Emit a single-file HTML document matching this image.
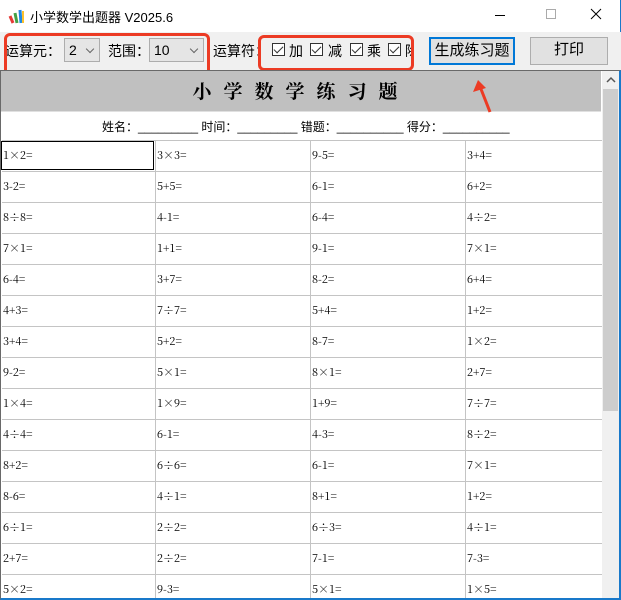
<!DOCTYPE html>
<html><head><meta charset="utf-8">
<style>
*{margin:0;padding:0;box-sizing:border-box}
body{width:621px;height:600px;background:#f0f0f0;position:relative;overflow:hidden;font-family:"Liberation Sans","Noto Sans CJK SC",sans-serif;color:#000}
.a{position:absolute}
.title{top:0;left:0;width:621px;height:32px;background:#fff;border-right:1px solid #1979ca}
.t14{font-size:14px}
.combo{background:#e5e5e5;border:1px solid #adadad;height:24px;font-size:14px;padding-left:4px;line-height:22px}
.chev{position:absolute;right:6px;top:7px;width:6px;height:6px;border-right:1px solid #666;border-bottom:1px solid #666;transform:rotate(45deg)}
.cb{width:13px;height:13px;border:1px solid #333;background:#fff}
.cb:after{content:"";position:absolute;left:3px;top:0px;width:4px;height:8px;border-right:1.5px solid #333;border-bottom:1.5px solid #333;transform:rotate(45deg)}
.red{border:3px solid #ec3b24;border-radius:6px}
.btn{background:#e1e1e1;border:1px solid #adadad;font-size:15px;text-align:center;line-height:24px}
.frame{top:70px;left:0;width:621px;height:530px;background:#fff;border-top:1px solid #696969;border-left:1px solid #696969;border-right:2px solid #1979ca;border-bottom:2px solid #1979ca;overflow:hidden}
.cell{position:absolute;font-size:11px;line-height:31px;padding-left:2px;height:31px;font-family:"Noto Serif CJK SC","Liberation Serif",serif}
.hl{position:absolute;left:1px;width:600px;height:1px;background:#c4c4c4}
.vl{position:absolute;width:1px;background:#c4c4c4}
</style></head><body>
<div class="a title">
  <svg class="a" style="left:8px;top:7px" width="18" height="18" viewBox="0 0 18 18">
    <path d="M2 9 L5 16" stroke="#e53935" stroke-width="3"/>
    <path d="M7 6 L9 16" stroke="#43a047" stroke-width="3"/>
    <path d="M12 3 L13 16" stroke="#1e88e5" stroke-width="3"/>
    <path d="M15 4 L15 16" stroke="#fbc02d" stroke-width="2"/>
  </svg>
  <div class="a" style="left:30px;top:7px;font-size:13px">小学数学出题器 V2025.6</div>
  <div class="a" style="left:495px;top:15px;width:10px;height:1px;background:#000"></div>
  <div class="a" style="left:546px;top:9px;width:10px;height:10px;border:1px solid #aaa"></div>
  <svg class="a" style="left:590px;top:8px" width="12" height="12"><path d="M1 1L11 11M11 1L1 11" stroke="#000" stroke-width="1"/></svg>
</div>
<div class="a t14" style="left:5px;top:41px">运算元：</div>
<div class="a combo" style="left:64px;top:38px;width:36px">2<div class="chev"></div></div>
<div class="a t14" style="left:108px;top:41px">范围：</div>
<div class="a combo" style="left:149px;top:38px;width:55px">10<div class="chev"></div></div>
<div class="a red" style="left:4px;top:33px;width:206px;height:45px"></div>
<div class="a t14" style="left:213px;top:41px">运算符：</div>
<div class="a cb" style="left:272px;top:43px"></div><div class="a t14" style="left:289px;top:41px">加</div>
<div class="a cb" style="left:310px;top:43px"></div><div class="a t14" style="left:328px;top:41px">减</div>
<div class="a cb" style="left:350px;top:43px"></div><div class="a t14" style="left:367px;top:41px">乘</div>
<div class="a cb" style="left:388px;top:43px"></div><div class="a t14" style="left:405px;top:41px;width:8px;overflow:hidden">除</div>
<div class="a red" style="left:258px;top:35px;width:156px;height:36px"></div>
<div class="a btn" style="left:429px;top:37px;width:86px;height:28px;border:2px solid #0078d7">生成练习题</div>
<div class="a btn" style="left:530px;top:37px;width:78px;height:28px">打印</div>
<div class="a frame">
  <div class="a" style="left:0;top:0;width:600px;height:40px;background:#c0c0c0;text-align:center;font-size:19px;font-weight:bold;line-height:40px;letter-spacing:12px;font-family:'Noto Serif CJK SC',serif">小学数学练习题</div>
  <div class="a" style="left:0;top:40px;width:600px;height:1px;background:#e0e0e0"></div>
  <div class="a" style="left:101px;top:47px;font-size:12px;white-space:pre">姓名：_________ 时间：_________ 错题：__________ 得分：__________</div>
  <div id="grid"></div>
  <div class="a" style="left:601px;top:0;width:17px;height:530px;background:#f0f0f0"></div>
  <div class="a" style="left:602px;top:18px;width:15px;height:322px;background:#cdcdcd"></div>
  <svg class="a" style="left:605px;top:5px" width="10" height="7"><path d="M1 6L5 2L9 6" stroke="#555" stroke-width="1.5" fill="none"/></svg>
</div>
<svg class="a" style="left:470px;top:76px" width="30" height="40"><path d="M20 36 L9 8" stroke="#ec3b24" stroke-width="3"/><path d="M8 4 L3 16 L16 12 Z" fill="#ec3b24"/></svg>
<script>
var d=[["1×2=","3×3=","9-5=","3+4="],["3-2=","5+5=","6-1=","6+2="],["8÷8=","4-1=","6-4=","4÷2="],["7×1=","1+1=","9-1=","7×1="],["6-4=","3+7=","8-2=","6+4="],["4+3=","7÷7=","5+4=","1+2="],["3+4=","5+2=","8-7=","1×2="],["9-2=","5×1=","8×1=","2+7="],["1×4=","1×9=","1+9=","7÷7="],["4÷4=","6-1=","4-3=","8÷2="],["8+2=","6÷6=","6-1=","7×1="],["8-6=","4÷1=","8+1=","1+2="],["6÷1=","2÷2=","6÷3=","4÷1="],["2+7=","2÷2=","7-1=","7-3="],["5×2=","9-3=","5×1=","1×5="]];
var h="",xs=[0,154,309,464];
for(var r=0;r<d.length;r++){var y=69+r*31;h+='<div class="hl" style="top:'+y+'px"></div>';
for(var c=0;c<4;c++)h+='<div class="cell" style="left:'+xs[c]+'px;top:'+y+'px">'+d[r][c]+'</div>';}
for(var c=1;c<4;c++)h+='<div class="vl" style="left:'+xs[c]+'px;top:69px;height:470px"></div>';
h+='<div class="a" style="left:0;top:70px;width:153px;height:29px;border:1px solid #000"></div>';
document.getElementById("grid").innerHTML=h;
</script>
</body></html>
